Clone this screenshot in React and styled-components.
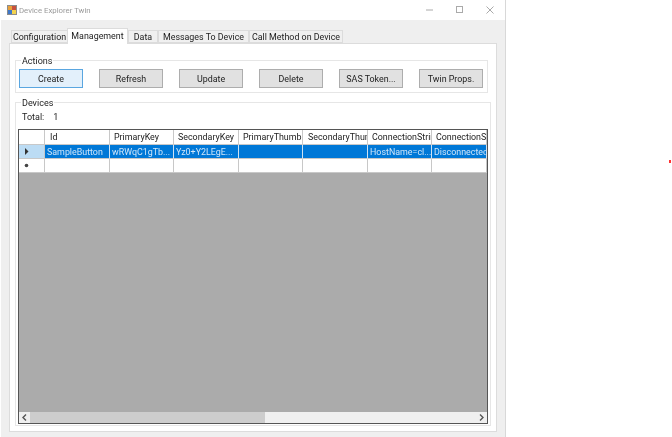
import React from 'react'
import styled, { createGlobalStyle } from 'styled-components'

const GlobalStyle = createGlobalStyle`
  html, body { margin: 0; padding: 0; background: #fff; }
  body { width: 672px; height: 437px; overflow: hidden; font-family: Roboto, "Noto Sans", sans-serif; }
`

const Page = styled.div`
  position: relative;
  width: 672px;
  height: 437px;
  display: flex;
  align-items: flex-start;
`

const Window = styled.div`
  width: 505px;
  height: 437px;
  margin-left: 1px;
  box-sizing: border-box;
  background: #efefef;
  border-right: 1px solid #d8d8d8;
  display: flex;
  flex-direction: column;
  filter: blur(0.25px);
  color: #222;
  font-size: 8.9px;
`

const TitleBar = styled.div`
  height: 20px;
  flex: none;
  background: #fff;
  display: flex;
  align-items: center;
  padding-left: 6px;
`

const Title = styled.span`
  color: #9a9a9a;
  font-size: 7.8px;
  margin-left: 2px;
  flex: 1;
`

const WinButtons = styled.div`
  display: flex;
  align-items: center;
  gap: 20px;
  margin-right: 10px;
`

const Body = styled.div`
  flex: 1;
  padding: 6px 8px 5px 8px;
  display: flex;
  flex-direction: column;
  min-height: 0;
`

const Tabs = styled.div`
  display: flex;
  align-items: flex-end;
  height: 17px;
  flex: none;
  padding-left: 2px;
  position: relative;
  z-index: 1;
`

const Tab = styled.div`
  box-sizing: border-box;
  width: ${p => p.$w}px;
  height: ${p => (p.$active ? 16 : 13)}px;
  margin-bottom: ${p => (p.$active ? -1 : 0)}px;
  padding-bottom: ${p => (p.$active ? 2 : 0)}px;
  background: ${p => (p.$active ? '#fff' : '#f0f0f0')};
  border: 1px solid #dcdcdc;
  border-bottom: ${p => (p.$active ? 'none' : '1px solid #dcdcdc')};
  margin-left: ${p => (p.$active ? -1 : 0)}px;
  display: flex;
  align-items: center;
  justify-content: center;
  white-space: nowrap;
`

const Panel = styled.div`
  flex: 1;
  background: #fff;
  border: 1px solid #dcdcdc;
  padding: 16px 5px 5px 5px;
  display: flex;
  flex-direction: column;
  min-height: 0;
`

const Group = styled.div`
  position: relative;
  box-sizing: border-box;
  border: 1px solid #e6e6e6;
  flex: none;
`

const Legend = styled.span`
  position: absolute;
  top: -6px;
  left: 5px;
  padding: 0 1px;
  background: #fff;
  font-size: 9px;
  line-height: 12px;
`

const ActionsGroup = styled(Group)`
  width: 473px;
  height: 33px;
  padding: 8px 0 0 3px;
  display: flex;
  gap: 16px;
`

const Action = styled.div`
  box-sizing: border-box;
  width: 64px;
  height: 19px;
  flex: none;
  background: ${p => (p.$primary ? '#e3f0fb' : '#e1e1e1')};
  border: 1px solid ${p => (p.$primary ? '#5aa6e0' : '#adadad')};
  display: flex;
  align-items: center;
  justify-content: center;
  white-space: nowrap;
`

const DevicesGroup = styled(Group)`
  margin-top: 9px;
  flex: 1;
  width: 476px;
  padding: 7px 2px 1px 2px;
  display: flex;
  flex-direction: column;
  min-height: 0;
`

const Total = styled.div`
  display: flex;
  gap: 9px;
  height: 14px;
  margin: 0 0 5px 4px;
  align-items: center;
  font-size: 9px;
`

const Grid = styled.div`
  box-sizing: border-box;
  width: 470px;
  flex: 1;
  border: 1px solid #555;
  background: #ababab;
  display: flex;
  flex-direction: column;
  min-height: 0;
`

const Row = styled.div`
  display: flex;
  flex: none;
  height: ${p => p.$h}px;
`

const Cell = styled.div`
  box-sizing: border-box;
  width: ${p => p.$w}px;
  flex: none;
  padding-left: ${p => p.$pad}px;
  background: ${p => (p.$selected ? '#0078d7' : '#fff')};
  color: ${p => (p.$selected ? '#cfe6fa' : '#222')};
  border-right: 1px solid ${p => (p.$selected ? '#cfe2f3' : '#c8c8c8')};
  border-bottom: 1px solid #c8c8c8;
  display: flex;
  align-items: center;
  overflow: hidden;
  white-space: nowrap;
`

const RowHead = styled(Cell)`
  padding-left: 5px;
  background: ${p => (p.$current ? '#bcdcf4' : '#fff')};
  color: #333;
`

const Spacer = styled.div`
  flex: 1;
`

const ScrollBar = styled.div`
  height: 11px;
  flex: none;
  display: flex;
  background: #f0f0f0;
  align-items: stretch;
`

const ScrollArrow = styled.div`
  width: 11px;
  flex: none;
  background: #f0f0f0;
  display: flex;
  align-items: center;
  justify-content: center;
`

const Thumb = styled.div`
  width: 235px;
  flex: none;
  background: #cdcdcd;
`

const Track = styled.div`
  flex: 1;
`

const RedMark = styled.div`
  position: absolute;
  left: 669px;
  top: 160px;
  width: 2px;
  height: 3px;
  background: #f33;
`

const AppIcon = () => (
  <svg width="10" height="10" viewBox="0 0 10 10">
    <rect x="0" y="0" width="10" height="10" fill="#8c8c8c" />
    <rect x="1" y="1" width="4" height="4" fill="#e9a13b" />
    <rect x="5" y="1" width="4" height="4" fill="#c9503c" />
    <rect x="1" y="5" width="4" height="4" fill="#3f78c9" />
    <rect x="5" y="5" width="4" height="4" fill="#f2d34f" />
  </svg>
)

const MinIcon = () => (
  <svg width="10" height="10" viewBox="0 0 10 10">
    <path d="M1 5h7" stroke="#aaa" strokeWidth="1" />
  </svg>
)

const MaxIcon = () => (
  <svg width="10" height="10" viewBox="0 0 10 10">
    <rect x="1.5" y="1.5" width="6" height="6" fill="none" stroke="#aaa" strokeWidth="1" />
  </svg>
)

const CloseIcon = () => (
  <svg width="10" height="10" viewBox="0 0 10 10">
    <path d="M1.5 1.5l7 7M8.5 1.5l-7 7" stroke="#aaa" strokeWidth="1" />
  </svg>
)

const Arrow = ({ dir }) => (
  <svg width="5" height="7" viewBox="0 0 5 7">
    <path d={dir === 'left' ? 'M4 0.5L1 3.5L4 6.5' : 'M1 0.5L4 3.5L1 6.5'} fill="none" stroke="#555" strokeWidth="1.4" />
  </svg>
)

const RowPointer = () => (
  <svg width="5" height="7" viewBox="0 0 5 7">
    <path d="M1 0L4.5 3.5L1 7z" fill="#333" />
  </svg>
)

const NewRowDot = () => (
  <svg width="5" height="5" viewBox="0 0 5 5">
    <circle cx="2.5" cy="2.5" r="1.8" fill="#444" />
  </svg>
)

const tabs = [
  { label: 'Configuration', w: 57 },
  { label: 'Management', w: 61, active: true },
  { label: 'Data', w: 30 },
  { label: 'Messages To Device', w: 91 },
  { label: 'Call Method on Device', w: 94 },
]

const actions = ['Create', 'Refresh', 'Update', 'Delete', 'SAS Token...', 'Twin Props.']

const columns = [
  { title: 'Id', w: 65, pad: 5, value: 'SampleButton' },
  { title: 'PrimaryKey', w: 64, pad: 4, value: 'wRWqC1gTb...' },
  { title: 'SecondaryKey', w: 65, pad: 4, value: 'Yz0+Y2LEgE...' },
  { title: 'PrimaryThumbk', w: 64, pad: 4, value: '' },
  { title: 'SecondaryThumb', w: 65, pad: 5, value: '' },
  { title: 'ConnectionString', w: 64, pad: 4, value: 'HostName=cl...' },
  { title: 'ConnectionState', w: 55, pad: 4, value: 'Disconnected' },
]

const App = () => (
  <Page>
    <GlobalStyle />
    <Window>
      <TitleBar>
        <AppIcon />
        <Title>Device Explorer Twin</Title>
        <WinButtons>
          <MinIcon />
          <MaxIcon />
          <CloseIcon />
        </WinButtons>
      </TitleBar>
      <Body>
        <Tabs>
          {tabs.map(t => (
            <Tab key={t.label} $w={t.w} $active={t.active}>{t.label}</Tab>
          ))}
        </Tabs>
        <Panel>
          <ActionsGroup>
            <Legend>Actions</Legend>
            {actions.map((a, i) => (
              <Action key={a} $primary={i === 0}>{a}</Action>
            ))}
          </ActionsGroup>
          <DevicesGroup>
            <Legend>Devices</Legend>
            <Total>
              <span>Total:</span>
              <span>1</span>
            </Total>
            <Grid>
              <Row $h={15}>
                <RowHead $w={26} />
                {columns.map(c => (
                  <Cell key={c.title} $w={c.w} $pad={c.pad}>{c.title}</Cell>
                ))}
              </Row>
              <Row $h={14}>
                <RowHead $w={26} $current><RowPointer /></RowHead>
                {columns.map(c => (
                  <Cell key={c.title} $w={c.w} $pad={2} $selected>{c.value}</Cell>
                ))}
              </Row>
              <Row $h={14}>
                <RowHead $w={26}><NewRowDot /></RowHead>
                {columns.map(c => (
                  <Cell key={c.title} $w={c.w} $pad={1} />
                ))}
              </Row>
              <Spacer />
              <ScrollBar>
                <ScrollArrow><Arrow dir="left" /></ScrollArrow>
                <Thumb />
                <Track />
                <ScrollArrow><Arrow dir="right" /></ScrollArrow>
              </ScrollBar>
            </Grid>
          </DevicesGroup>
        </Panel>
      </Body>
    </Window>
    <RedMark />
  </Page>
)

export default App
